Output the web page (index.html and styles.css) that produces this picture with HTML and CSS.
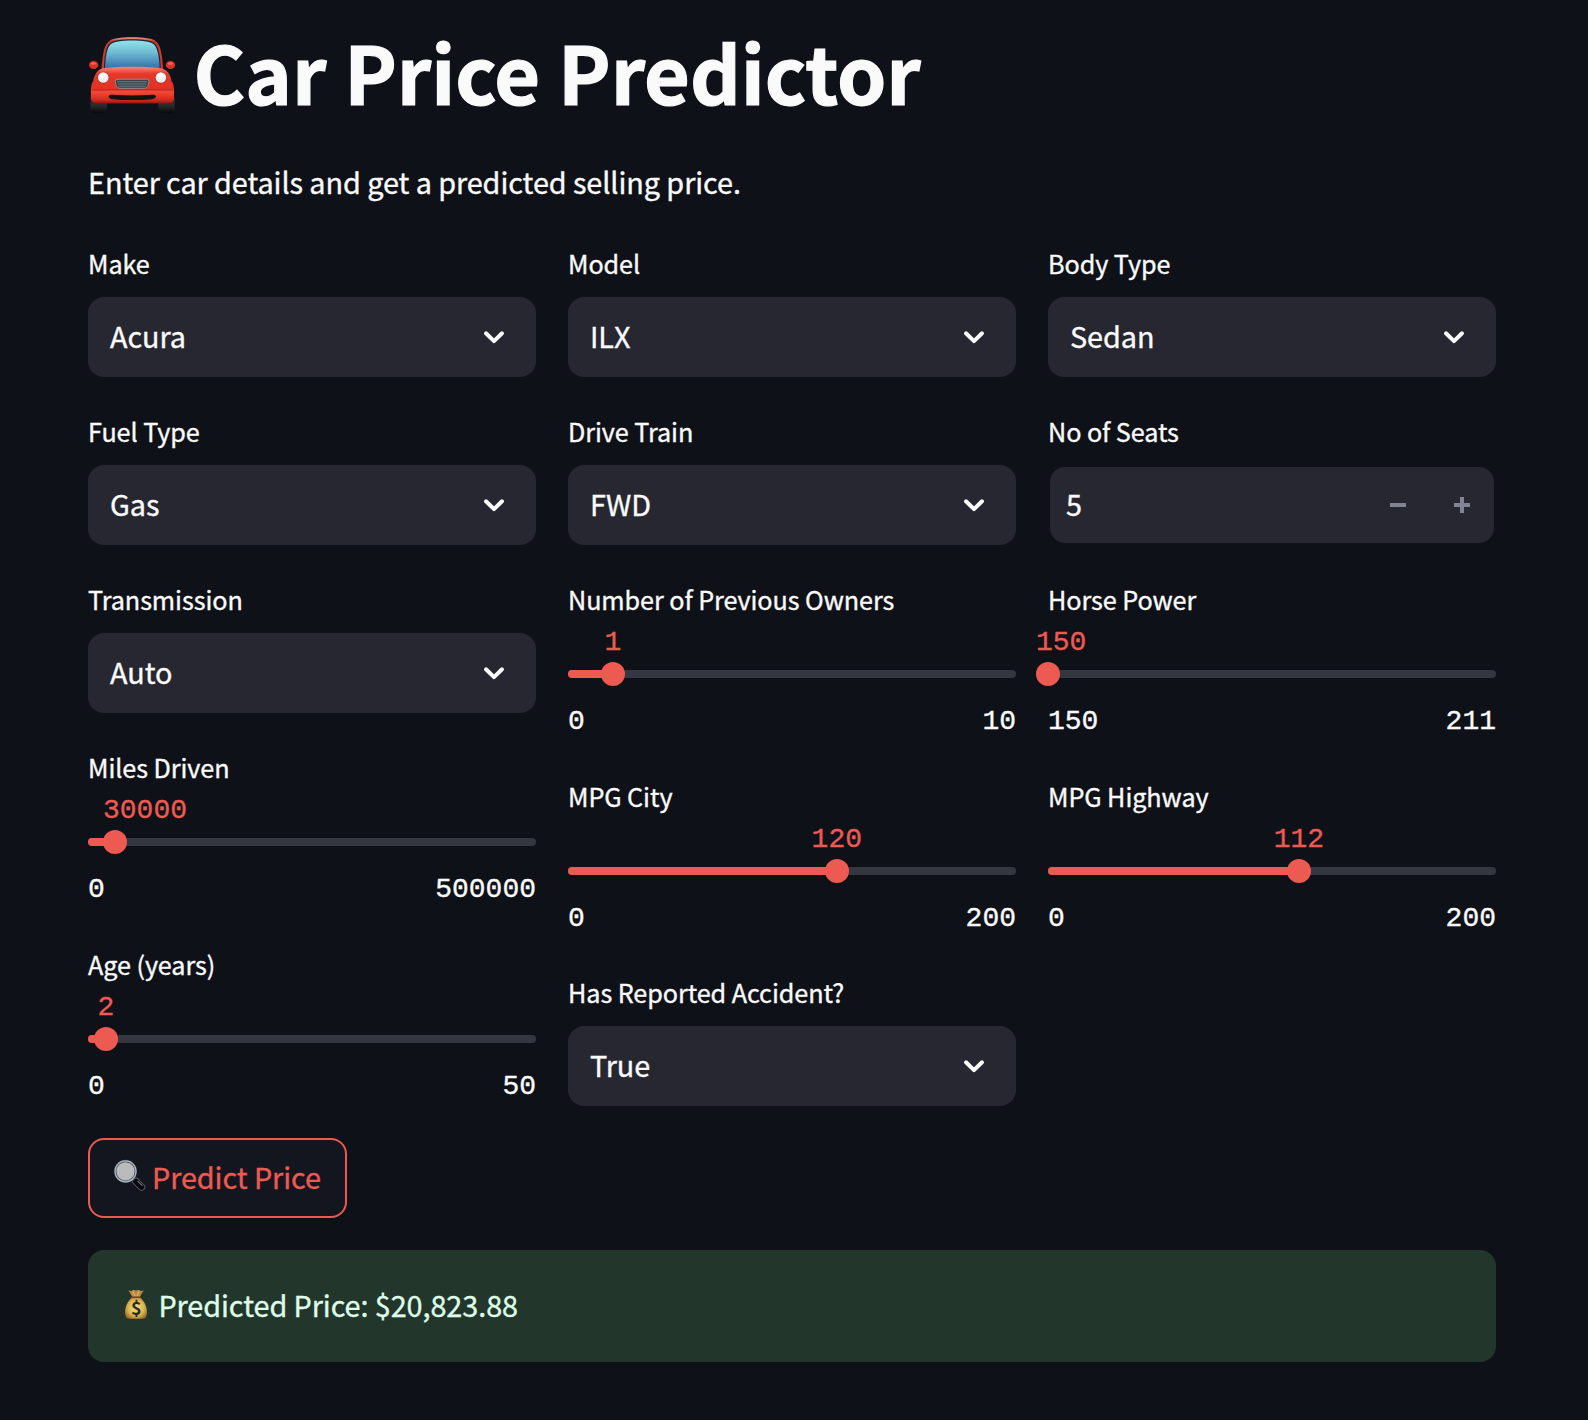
FILE: index.html
```html
<!DOCTYPE html>
<html lang="en">
<head>
<meta charset="utf-8">
<title>Car Price Predictor</title>
<link rel="stylesheet" href="styles.css">
</head>
<body>
<svg class="defs" width="0" height="0" aria-hidden="true">
  <symbol id="chevron" viewBox="0 0 32 32"><path d="M8 12.3 16 20.1 24 12.3" fill="none" stroke="currentColor" stroke-width="4" stroke-linecap="round" stroke-linejoin="round"/></symbol>
</svg>
<main class="page">
  <h1 class="title">
    <svg class="car" viewBox="0 0 88 78" aria-hidden="true">
      <defs>
        <linearGradient id="glass" x1="0" y1="0" x2="0" y2="1"><stop offset="0" stop-color="#93e3ea"/><stop offset=".45" stop-color="#6fb9d2"/><stop offset="1" stop-color="#3470a8"/></linearGradient>
        <linearGradient id="paint" x1="0" y1="0" x2="0" y2="1"><stop offset="0" stop-color="#f58a76"/><stop offset=".2" stop-color="#e6392a"/><stop offset=".6" stop-color="#e23224"/><stop offset=".68" stop-color="#f04a38"/><stop offset=".9" stop-color="#d42a1d"/><stop offset="1" stop-color="#8e160e"/></linearGradient>
        <linearGradient id="tire" x1="0" y1="0" x2="0" y2="1"><stop offset="0" stop-color="#333"/><stop offset=".6" stop-color="#2a2a2b"/><stop offset="1" stop-color="#08090a"/></linearGradient>
        <linearGradient id="roof" x1="0" y1="0" x2="0" y2="1"><stop offset="0" stop-color="#f0a08e"/><stop offset=".12" stop-color="#c93a27"/><stop offset="1" stop-color="#e63627"/></linearGradient>
      </defs>
      <rect x="1.5" y="58" width="16.5" height="18" rx="4" fill="url(#tire)"/>
      <rect x="69.3" y="58" width="16.5" height="18" rx="4" fill="url(#tire)"/>
      <path d="M12.5 33C13.5 18 15 9 19 5.200C23 1 32 .3 43 .3S64 1 68 5.200C71.500 9 73.500 18 74 33Z" fill="url(#roof)"/>
      <path d="M14.800 31C15.300 19 17 10.500 20 7C23.500 3 32 2.200 43 2.200S63 3 66.500 7C69.500 10.500 71.500 19 71.800 31Z" fill="#182735"/>
      <path d="M16 31C16.500 19 18 11.500 21 8C24 4.500 33 3.600 43 3.600S62.500 4.500 65.500 8C68.500 11.500 70 19 70.700 31Z" fill="url(#glass)"/>
      <ellipse cx="4.700" cy="28" rx="4.700" ry="4" fill="#dc3023"/><ellipse cx="4.400" cy="26.600" rx="2.800" ry="1.300" fill="#ed6653"/>
      <ellipse cx="81.500" cy="28" rx="4.700" ry="4" fill="#dc3023"/><ellipse cx="81.300" cy="26.600" rx="2.800" ry="1.300" fill="#ed6653"/>
      <path d="M13 31.500C22 29 64 29 73 31.500C80 34 82 39 82.500 44.500C85.200 46 85.300 54 85 62Q84.500 66.500 78 66.500H9Q3 66.500 2 62C1.700 54 1.800 46 4.200 44.500C5 39 7 34 13 31.500Z" fill="url(#paint)"/>
      <path d="M3.500 53Q43 52 84 53" stroke="#a92219" stroke-width=".8" fill="none"/>
      <path d="M26.300 44.200Q26.300 42.200 29 42.200H57.500Q60.200 42.200 59.900 44.200C59.600 48.500 58 51.300 55.500 51.300H31C28 51.300 26.800 48.500 26.300 44.200Z" fill="#364149" stroke="#84949a" stroke-width="1"/>
      <path d="M28 44.700H58.300M29 47H57.500M30 49.200H56.500" stroke="#8b999e" stroke-width=".7"/>
      <circle cx="14.300" cy="40.700" r="5.900" fill="#9c2e26"/><circle cx="14.300" cy="40.500" r="5.300" fill="#eee"/><circle cx="13.700" cy="38.500" r="2.700" fill="#fff"/>
      <circle cx="71.900" cy="40.700" r="5.900" fill="#9c2e26"/><circle cx="71.900" cy="40.500" r="5.300" fill="#eee"/><circle cx="71.500" cy="38.500" r="2.700" fill="#fff"/>
      <path d="M19.500 59.500Q20 57.500 23 57.800Q43 59 63.500 57.800Q66.800 57.500 67 59.500C66.500 62.500 61 63 43 63S20 62.500 19.500 59.500Z" fill="#17100f"/>
    </svg>
    <span class="title-text">Car Price Predictor</span>
  </h1>
  <p class="intro">Enter car details and get a predicted selling price.</p>

  <div class="columns">
    <section class="column">
      <div class="field"><div class="label">Make</div><div class="select"><span>Acura</span><svg class="chev"><use href="#chevron"/></svg></div></div>
      <div class="field"><div class="label">Fuel Type</div><div class="select"><span>Gas</span><svg class="chev"><use href="#chevron"/></svg></div></div>
      <div class="field"><div class="label">Transmission</div><div class="select"><span>Auto</span><svg class="chev"><use href="#chevron"/></svg></div></div>
      <div class="field"><div class="label">Miles Driven</div>
        <div class="slider" style="--pos:6%"><div class="track"><div class="fill"></div><div class="thumb"></div><div class="value value-wide">30000</div></div><div class="ticks"><span>0</span><span>500000</span></div></div></div>
      <div class="field"><div class="label">Age (years)</div>
        <div class="slider" style="--pos:4%"><div class="track"><div class="fill"></div><div class="thumb"></div><div class="value">2</div></div><div class="ticks"><span>0</span><span>50</span></div></div></div>
    </section>
    <section class="column">
      <div class="field"><div class="label">Model</div><div class="select"><span>ILX</span><svg class="chev"><use href="#chevron"/></svg></div></div>
      <div class="field"><div class="label">Drive Train</div><div class="select"><span>FWD</span><svg class="chev"><use href="#chevron"/></svg></div></div>
      <div class="field"><div class="label">Number of Previous Owners</div>
        <div class="slider" style="--pos:10%"><div class="track"><div class="fill"></div><div class="thumb"></div><div class="value">1</div></div><div class="ticks"><span>0</span><span>10</span></div></div></div>
      <div class="field"><div class="label">MPG City</div>
        <div class="slider" style="--pos:60%"><div class="track"><div class="fill"></div><div class="thumb"></div><div class="value">120</div></div><div class="ticks"><span>0</span><span>200</span></div></div></div>
      <div class="field"><div class="label">Has Reported Accident?</div><div class="select"><span>True</span><svg class="chev"><use href="#chevron"/></svg></div></div>
    </section>
    <section class="column">
      <div class="field"><div class="label">Body Type</div><div class="select"><span>Sedan</span><svg class="chev"><use href="#chevron"/></svg></div></div>
      <div class="field"><div class="label">No of Seats</div>
        <div class="number"><span class="number-value">5</span>
          <svg class="step" viewBox="0 0 16 16"><path d="M0 8H16" stroke="currentColor" stroke-width="4"/></svg>
          <svg class="step" viewBox="0 0 16 16"><path d="M0 8H16M8 0V16" stroke="currentColor" stroke-width="4"/></svg>
        </div></div>
      <div class="field"><div class="label">Horse Power</div>
        <div class="slider" style="--pos:0%"><div class="track"><div class="fill"></div><div class="thumb"></div><div class="value value-start">150</div></div><div class="ticks"><span>150</span><span>211</span></div></div></div>
      <div class="field"><div class="label">MPG Highway</div>
        <div class="slider" style="--pos:56%"><div class="track"><div class="fill"></div><div class="thumb"></div><div class="value">112</div></div><div class="ticks"><span>0</span><span>200</span></div></div></div>
    </section>
  </div>

  <button class="predict" type="button">
    <svg class="lens" viewBox="0 0 34 34" aria-hidden="true">
      <path d="M19.500 19.500 24 24" stroke="#a3a7ab" stroke-width="3"/>
      <path d="M23 22.500 28.500 28" stroke="#5d6168" stroke-width="7.400" stroke-linecap="round"/>
      <path d="M23 22.500 28.500 28" stroke="#08090c" stroke-width="5.600" stroke-linecap="round"/>
      <path d="M24.500 21.800 29.500 26.800" stroke="#666c76" stroke-width="1.200"/>
      <circle cx="12.500" cy="12.300" r="10.300" fill="#bbbbbd" stroke="#47505b" stroke-width="2.400"/>
      <circle cx="12.500" cy="12.300" r="10.500" fill="none" stroke="#a9b5c1" stroke-width="1.200"/>
    </svg>
    <span>Predict Price</span>
  </button>

  <div class="result">
    <svg class="bag" viewBox="0 0 22 30" aria-hidden="true">
      <defs><radialGradient id="gold" cx=".5" cy=".5" r=".6"><stop offset="0" stop-color="#f6dc80"/><stop offset=".6" stop-color="#dcb652"/><stop offset="1" stop-color="#936622"/></radialGradient></defs>
      <path d="M3.500 1.500 6.500 2 8.500 .8 11 1.500 14 .8 15.500 2 18.500 1.500 14.800 8H7.400Z" fill="#b98a42"/>
      <path d="M8 2.500 9.800 7M13.800 2.500 12.300 7" stroke="#e3c07a" stroke-width="1"/>
      <path d="M7.300 8H14.800C18 11 22 16 22 23C22 28 20.500 29.700 17.500 29.700H4.500C1.500 29.700 0 28 0 23C0 16 4 11 7.300 8Z" fill="url(#gold)"/>
      <path d="M6.800 8.300H15.300" stroke="#734716" stroke-width="1.500"/>
      <text class="bag-sign" x="11.200" y="25.800" text-anchor="middle">$</text>
    </svg>
    <span>Predicted Price: $20,823.88</span>
  </div>
</main>
</body>
</html>
```
FILE: styles.css
```css
:root {
  --accent: #ed5a52;
  --surface: #262730;
  --text: #fafafa;
}

* { box-sizing: border-box; }

body {
  margin: 0;
  min-height: 1420px;
  background: #0e1117;
  color: var(--text);
  font-family: "Noto Sans CJK SC", "Open Sans", sans-serif;
  font-size: 28.8px;
  letter-spacing: -0.07px;
  -webkit-text-stroke: 0.35px currentColor;
}

svg { display: block; flex: none; }
.defs { position: absolute; }

.page {
  width: 1408px;
  margin-left: 88px;
  padding-top: 29px;
}

.title {
  display: flex;
  align-items: center;
  height: 82px;
  margin: 0;
  font-size: 79px;
  font-weight: 700;
  line-height: 82px;
  white-space: nowrap;
  -webkit-text-stroke-width: 1.2px;
}

.title-text { padding-top: 1px; }
.car { width: 88px; height: 78px; margin: 11px 16.6px 0 1px; }

.intro {
  height: 48px;
  margin: 47px 0 35px;
  line-height: 48px;
}

.columns {
  display: grid;
  grid-template-columns: repeat(3, 1fr);
  gap: 32px;
}

.column {
  display: flex;
  flex-direction: column;
  gap: 32px;
}

.label {
  height: 56px;
  font-size: 25.2px;
  line-height: 44px;
  white-space: nowrap;
}

.select {
  display: flex;
  align-items: center;
  justify-content: space-between;
  height: 80px;
  padding: 0 26px 0 22px;
  border-radius: 16px;
  background: var(--surface);
}

.select span { margin-bottom: 3px; }
.chev { width: 32px; height: 32px; }

.number {
  display: flex;
  align-items: center;
  gap: 48px;
  height: 76px;
  margin: 2px;
  padding: 0 24px 0 16px;
  border-radius: 15px;
  background: var(--surface);
}

.number-value { flex: 1; margin-bottom: 3px; }
.step { width: 16px; height: 16px; color: #808495; }

.slider {
  height: 108.6px;
  padding-top: 37px;
  font-family: "Liberation Mono", monospace;
  font-size: 28px;
  line-height: 32px;
  letter-spacing: 0;
}

.track {
  position: relative;
  height: 8px;
  border-radius: 4px;
  background: #353740;
}

.fill {
  width: var(--pos);
  height: 8px;
  border-radius: 4px 0 0 4px;
  background: var(--accent);
}

.thumb {
  position: absolute;
  top: -8px;
  left: var(--pos);
  width: 24px;
  height: 24px;
  border-radius: 50%;
  background: var(--accent);
  transform: translateX(-50%);
}

.value {
  position: absolute;
  top: -43px;
  left: var(--pos);
  color: var(--accent);
  transform: translateX(-50%);
}

.value-wide { left: 15px; transform: none; }
.value-start { left: -12px; transform: none; }

.ticks {
  display: flex;
  justify-content: space-between;
  margin-top: 28px;
}

.predict {
  display: flex;
  align-items: center;
  width: 259px;
  height: 80px;
  margin: 31.8px 0 32px;
  padding: 0 0 3px 23px;
  border: 2px solid var(--accent);
  border-radius: 16px;
  background: #13161e;
  color: var(--accent);
  font: inherit;
  letter-spacing: inherit;
  white-space: nowrap;
}

.lens { width: 34px; height: 34px; margin-right: 5px; }

.result {
  display: flex;
  align-items: center;
  height: 112px;
  padding: 0 37px 3px;
  border-radius: 16px;
  background: #23362b;
  color: #dffde9;
}

.bag { width: 22px; height: 30px; margin-right: 11.4px; }
.bag-sign { fill: #2c292b; font: 700 18px "Noto Sans CJK SC", sans-serif; -webkit-text-stroke: 0; }
```
